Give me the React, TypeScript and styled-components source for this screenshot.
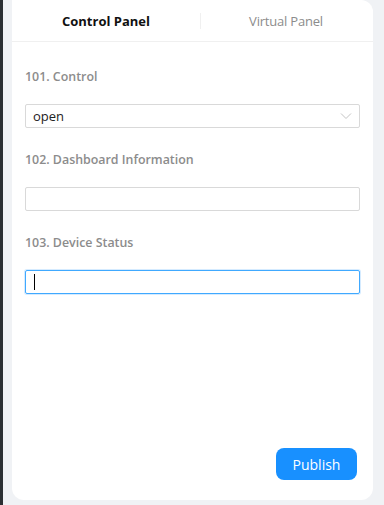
import React from "react";
import styled, { createGlobalStyle } from "styled-components";

const Global = createGlobalStyle`
  html, body { margin: 0; padding: 0; background: #f0f2f5; }
  body { font-family: "Open Sans", "Noto Sans", sans-serif; }
  * { box-sizing: border-box; }
`;

const Page = styled.div`
  width: 384px;
  height: 505px;
  display: flex;
  background: #f0f2f5;
  padding: 0 11px 0 0;
`;

const EdgeStrip = styled.div`
  width: 3px;
  background: #2b2f33;
  margin-right: 9px;
`;

const Card = styled.div`
  flex: 1;
  margin-bottom: 5px;
  background: #ffffff;
  border-radius: 0 12px 12px 12px;
  display: flex;
  flex-direction: column;
`;

const Tabs = styled.div`
  height: 42px;
  display: flex;
  align-items: center;
  border-bottom: 1px solid #f0f0f0;
  padding: 0 2px 0 0;
`;

const Tab = styled.div<{ $active?: boolean }>`
  flex: ${(p) => (p.$active ? "0 0 188px" : "1")};
  text-align: center;
  font-size: 13px;
  font-weight: ${(p) => (p.$active ? 700 : 400)};
  color: ${(p) => (p.$active ? "#111" : "#8c8c8c")};
  letter-spacing: ${(p) => (p.$active ? "0" : "-0.2px")};
`;

const TabDivider = styled.div`
  width: 1px;
  height: 16px;
  background: #f0f0f0;
`;

const Body = styled.div`
  flex: 1;
  display: flex;
  flex-direction: column;
  padding: 25px 13px 0 13px;
`;

const Field = styled.div`
  display: flex;
  flex-direction: column;
  margin-bottom: 22px;
`;

const Label = styled.div`
  font-size: 12.4px;
  font-weight: 600;
  color: #8c8c8c;
  line-height: 20px;
  margin-bottom: 17px;
`;

const SelectBox = styled.div`
  height: 24px;
  border: 1px solid #d9d9d9;
  border-radius: 2px;
  display: flex;
  align-items: center;
  justify-content: space-between;
  padding: 0 7px 0 7px;
  font-size: 13px;
  color: #222;
`;

const Input = styled.input`
  height: 24px;
  width: 100%;
  border: 1px solid #d9d9d9;
  border-radius: 2px;
  outline: none;
  padding: 0 7px;
  font-size: 13px;
  font-family: inherit;
  background: #fff;
`;

const Caret = styled.span`
  display: inline-block;
  width: 1px;
  height: 16px;
  background: #000;
`;

const FocusedBox = styled.div`
  height: 24px;
  border: 1px solid #40a9ff;
  box-shadow: 0 0 0 1px rgba(24, 144, 255, 0.18);
  border-radius: 2px;
  display: flex;
  align-items: center;
  padding: 0 8px;
`;

const Footer = styled.div`
  margin-top: auto;
  display: flex;
  justify-content: flex-end;
  padding: 0 16px 20px 0;
`;

const Button = styled.button`
  width: 81px;
  height: 32px;
  border: none;
  border-radius: 8px;
  background: #1890ff;
  color: #fff;
  font-size: 14px;
  font-family: inherit;
  cursor: pointer;
`;

export default function App() {
  return (
    <>
      <Global />
      <Page>
        <EdgeStrip />
        <Card>
          <Tabs>
            <Tab $active>Control Panel</Tab>
            <TabDivider />
            <Tab>Virtual Panel</Tab>
          </Tabs>
          <Body>
            <Field>
              <Label>101. Control</Label>
              <SelectBox>
                <span>open</span>
                <svg width="12" height="8" viewBox="0 0 12 8">
                  <path d="M1 1.5 L6 6.5 L11 1.5" fill="none" stroke="#c4c4c4" strokeWidth="1" />
                </svg>
              </SelectBox>
            </Field>
            <Field>
              <Label>102. Dashboard Information</Label>
              <Input readOnly />
            </Field>
            <Field>
              <Label>103. Device Status</Label>
              <FocusedBox>
                <Caret />
              </FocusedBox>
            </Field>
          </Body>
          <Footer>
            <Button>Publish</Button>
          </Footer>
        </Card>
      </Page>
    </>
  );
}
